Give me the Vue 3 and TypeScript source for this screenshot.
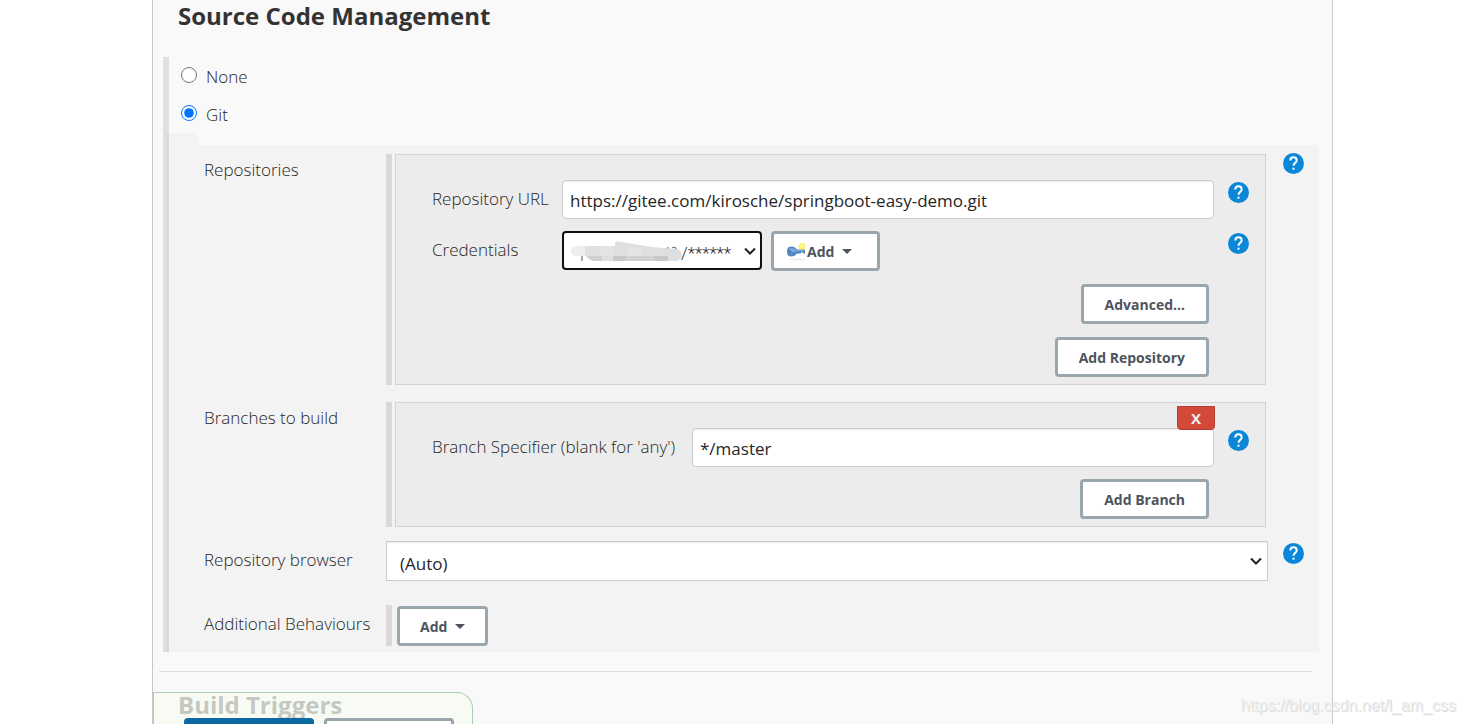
<script setup lang="ts">
import { ref } from 'vue'

const scm = ref('git')
const repositoryUrl = ref('https://gitee.com/kirosche/springboot-easy-demo.git')
const branch = ref('*/master')
</script>

<template>
  <div class="page">
    <main class="panel">
      <h2>Source Code Management</h2>

      <section class="scm">
        <label class="choice"><input v-model="scm" type="radio" name="scm" value="none"><span>None</span></label>
        <label class="choice"><input v-model="scm" type="radio" name="scm" value="git"><span>Git</span></label>

        <div class="nested">
          <div class="tab"></div>
          <div class="settings">
            <div class="row">
              <span class="name">Repositories</span>
              <div class="group">
                <div class="box repos">
                  <div class="field">
                    <label for="url">Repository URL</label>
                    <input id="url" v-model="repositoryUrl" class="text" type="text">
                    <button class="help" type="button" aria-label="Help for Repository URL">
                      <svg viewBox="0 0 21 21"><circle cx="10.5" cy="10.5" r="10.5" /><path d="M7.3 7.6C7.3 5.6 8.7 4.3 10.5 4.3s3.2 1.3 3.2 3.1c0 2.1-3.2 2.6-3.2 5.3" /><rect x="9.5" y="14.7" width="2" height="2" /></svg>
                    </button>
                  </div>
                  <div class="field second">
                    <label for="credentials">Credentials</label>
                    <div class="credentials">
                      <div class="select-wrap">
                        <select id="credentials" class="account"><option>/******</option></select>
                        <svg class="chevron" viewBox="0 0 12 8" aria-hidden="true"><path d="M1 1.500l5 5 5-5" /></svg>
                      </div>
                      <svg class="smudge" viewBox="0 0 112 22" aria-hidden="true">
                        <path class="mark" d="M11 13v7M95 8l2-1.500v5M101 7q4-2 4 1q0 2-3 2" />
                        <path fill="#eeeeee" d="M5 5h12v10H5a5 5 0 0 1 0-10z" />
                        <path fill="#dedfe0" d="M14 5h30V2q2-3 6-1l31 5 25 2q5 2 5 7-2 5-6 5H23q-7-1-9-7z" />
                        <path fill="#cfcfcf" d="M17 15h14v5h-8q-4-1-6-5z" />
                        <path fill="#c8c8c8" d="M42 15h13v5H42zM83 15h14v5H83z" />
                        <path fill="#d2d2d2" d="M55 15h28v5H55z" />
                        <path fill="#e4e4e4" d="M29 5h14v10H29zM57 6l13 1v8H57z" />
                      </svg>
                      <button class="btn key-btn" type="button">
                        <svg class="key" viewBox="0 0 20 18" aria-hidden="true">
                          <ellipse cx="10" cy="16.500" rx="8" ry="1" fill="#eeeeee" />
                          <circle cx="15" cy="3.500" r="3.500" fill="#fff36b" />
                          <circle cx="15" cy="3.500" r="1.500" fill="#fff9a8" />
                          <path fill="#5688c2" d="M1 4.500q4-2 7 0l2 2h8v4h-2v-1h-2v1h-4l-2 2q-4 2-7 0-2-4 0-8z" />
                          <path fill="#80addd" d="M2 6q4-2 7 1h8v1H9Q6 10 2 8z" />
                          <circle cx="3" cy="8" r="1" fill="#416b9d" />
                        </svg>
                        <span>Add</span><i class="caret"></i>
                      </button>
                    </div>
                    <button class="help" type="button" aria-label="Help for Credentials">
                      <svg viewBox="0 0 21 21"><circle cx="10.5" cy="10.5" r="10.5" /><path d="M7.3 7.6C7.3 5.6 8.7 4.3 10.5 4.3s3.2 1.3 3.2 3.1c0 2.1-3.2 2.6-3.2 5.3" /><rect x="9.5" y="14.7" width="2" height="2" /></svg>
                    </button>
                  </div>
                  <div class="actions">
                    <button class="btn" type="button">Advanced...</button>
                    <button class="btn" type="button">Add Repository</button>
                  </div>
                </div>
              </div>
              <button class="help outer" type="button" aria-label="Help for Repositories">
                <svg viewBox="0 0 21 21"><circle cx="10.5" cy="10.5" r="10.5" /><path d="M7.3 7.6C7.3 5.6 8.7 4.3 10.5 4.3s3.2 1.3 3.2 3.1c0 2.1-3.2 2.6-3.2 5.3" /><rect x="9.5" y="14.7" width="2" height="2" /></svg>
              </button>
            </div>

            <div class="row">
              <span class="name">Branches to build</span>
              <div class="group wide">
                <div class="box">
                  <div class="field branch">
                    <label for="branch">Branch Specifier (blank for 'any')</label>
                    <div class="branch-input">
                      <input id="branch" v-model="branch" class="text" type="text">
                      <button class="delete" type="button">X</button>
                    </div>
                    <button class="help" type="button" aria-label="Help for Branch Specifier">
                      <svg viewBox="0 0 21 21"><circle cx="10.5" cy="10.5" r="10.5" /><path d="M7.3 7.6C7.3 5.6 8.7 4.3 10.5 4.3s3.2 1.3 3.2 3.1c0 2.1-3.2 2.6-3.2 5.3" /><rect x="9.5" y="14.7" width="2" height="2" /></svg>
                    </button>
                  </div>
                  <div class="actions">
                    <button class="btn" type="button">Add Branch</button>
                  </div>
                </div>
              </div>
            </div>

            <div class="row browser-row">
              <label class="name" for="browser">Repository browser</label>
              <div class="select-wrap grow">
                <select id="browser" class="browser"><option>(Auto)</option></select>
                <svg class="chevron" viewBox="0 0 12 8" aria-hidden="true"><path d="M1 1.500l5 5 5-5" /></svg>
              </div>
              <button class="help outer" type="button" aria-label="Help for Repository browser">
                <svg viewBox="0 0 21 21"><circle cx="10.5" cy="10.5" r="10.5" /><path d="M7.3 7.6C7.3 5.6 8.7 4.3 10.5 4.3s3.2 1.3 3.2 3.1c0 2.1-3.2 2.6-3.2 5.3" /><rect x="9.5" y="14.7" width="2" height="2" /></svg>
              </button>
            </div>

            <div class="row behaviours">
              <span class="name">Additional Behaviours</span>
              <div class="group wide">
                <button class="btn" type="button"><span>Add</span><i class="caret"></i></button>
              </div>
            </div>
          </div>
        </div>
      </section>

      <hr>
      <h2 class="triggers">Build Triggers</h2>
    </main>

    <div class="save-bar">
      <button class="save" type="button" aria-label="Save"></button>
      <button class="btn" type="button" aria-label="Apply"></button>
    </div>
    <div class="watermark">https://blog.csdn.net/l_am_css</div>
  </div>
</template>

<style>
body { margin: 0; background: #fff; }
</style>

<style scoped>
* { box-sizing: border-box; }
.page {
  position: relative;
  height: 100vh;
  overflow: hidden;
  font-family: "Open Sans", "Noto Sans", sans-serif;
  font-size: 17px;
  font-weight: 330;
  line-height: 24px;
  color: #262626;
}
button, input, select { font: inherit; color: inherit; margin: 0; }
.panel {
  min-height: 100vh;
  margin: 0 132px 0 152px;
  padding: 0 13px 0 10px;
  border: solid #c8c8c8;
  border-width: 0 1px;
  background: #f9f9f9;
}
h2 { margin: 0 0 0 15px; font-size: 24px; line-height: 32px; font-weight: 700; color: #333; }
.scm { margin-top: 25px; border-left: 6px solid #e0e0e0; }
.choice { display: flex; align-items: center; height: 38px; padding: 2px 0 0 12px; }
.choice input { width: 16px; height: 16px; margin: 0 9px 4px 0; }
.nested { margin-left: -3px; border-left: 3px solid #d9d9d9; }
.tab { width: 29px; height: 12px; background: #f3f3f3; }
.settings {
  display: flex;
  flex-direction: column;
  gap: 17px;
  padding: 9px 15px 6px 35px;
  background: #f3f3f3;
}
.row { display: flex; align-items: flex-start; }
.name { flex: 0 0 182px; padding-top: 4px; white-space: nowrap; }
.group { flex: 1; min-width: 0; padding-left: 3px; border-left: 6px solid #d9d9d9; }
.group.wide { margin-right: 38px; }
.box { padding: 25px 16px 7px 36px; border: 1px solid #d3d3d3; background: #ececec; }
.field { display: flex; align-items: flex-start; }
.field > label { flex: 0 0 130px; padding-top: 7px; white-space: nowrap; }
.field.branch > label { flex-basis: 260px; }
.field.second { margin-top: 12px; }
.text {
  flex: 1;
  min-width: 0;
  width: 100%;
  height: 39px;
  padding: 1px 7px 0;
  border: 1px solid #ccc;
  border-radius: 4px;
  background: #fff;
  box-shadow: inset 0 1px 1px rgba(0, 0, 0, 0.075);
  outline: 0;
  font-weight: 370;
}
.help { flex: none; width: 21px; height: 21px; margin: 2px 0 0 14px; padding: 0; border: 0; background: none; }
.help.outer { margin: -1px 0 0 17px; }
.help svg { display: block; width: 21px; height: 21px; }
.help circle { fill: #0b87da; }
.help path { fill: none; stroke: #fff; stroke-width: 2; }
.help rect { fill: #fff; }
.credentials { position: relative; display: flex; flex: 1; gap: 9px; }
.select-wrap { position: relative; display: flex; }
.select-wrap.grow { flex: 1; }
.select-wrap select { appearance: none; outline: 0; }
.chevron { position: absolute; right: 6px; top: 16px; width: 12px; height: 8px; pointer-events: none; }
.chevron path { fill: none; stroke: #222; stroke-width: 2; }
.account {
  width: 200px;
  height: 39px;
  padding: 4px 0 0 117px;
  border: 2px solid #101010;
  border-radius: 4px;
  background: #fff;
  font-family: Roboto, sans-serif;
}
.smudge { position: absolute; left: 9px; top: 10px; width: 112px; height: 22px; pointer-events: none; }
.mark { fill: none; stroke: #555; stroke-width: 1; }
.btn {
  height: 40px;
  padding: 1px 20px 0;
  border: 3px solid #9aa6ae;
  border-radius: 4px;
  background: #fff;
  color: #4d545d;
  font-size: 14px;
  font-weight: 700;
  line-height: 32px;
  white-space: nowrap;
}
.key-btn { display: flex; align-items: center; padding: 1px 25px 0 13px; }
.key { width: 20px; height: 18px; }
.caret {
  display: inline-block;
  margin-left: 8px;
  vertical-align: 3px;
  border: solid transparent;
  border-width: 5px 5px 0;
  border-top-color: #4d545d;
}
.actions { display: flex; flex-direction: column; align-items: flex-end; gap: 13px; padding-right: 40px; margin-top: 13px; }
.actions .btn { padding: 1px 21px 0; }
.branch-input { position: relative; display: flex; flex: 1; }
.branch ~ .actions { margin-top: 12px; }
.delete {
  position: absolute;
  right: -1px;
  top: -22px;
  width: 38px;
  height: 24px;
  padding: 0;
  border: 1px solid #b93b2f;
  border-radius: 0 0 4px 4px;
  background: #d24939;
  color: #f3eeee;
  font-size: 15px;
  font-weight: 700;
  line-height: 20px;
}
.browser-row { margin-top: -3px; }
.browser-row .name { padding-top: 7px; }
.browser {
  width: 100%;
  height: 40px;
  padding: 5px 0 0 13px;
  border: 1px solid #ccc;
  border-radius: 0;
  background: #fff;
  box-shadow: inset 0 1px 1px rgba(0, 0, 0, 0.075);
  font-weight: 370;
}
.browser-row .help.outer { margin: 2px 0 0 15px; }
.behaviours { margin-top: 7px; }
.behaviours .name { padding-top: 7px; }
.behaviours .group { padding: 1px 0 0 5px; }
.behaviours .btn { display: block; }
hr { margin: 19px 7px 0 -4px; border: 0; border-top: 1px solid #ddd; }
.triggers { margin-top: 17px; }
.save-bar {
  position: absolute;
  left: 153px;
  bottom: 0;
  display: flex;
  gap: 10px;
  width: 320px;
  height: 32px;
  padding: 25px 18px 0 30px;
  overflow: hidden;
  border: solid #a9ceb6;
  border-width: 1px 1px 0;
  border-radius: 0 16px 0 0;
  background: rgba(246, 251, 241, 0.75);
}
.save-bar button { flex: none; width: 130px; height: 40px; }
.save { border: 0; border-radius: 4px; background: #0b6aa2; }
.watermark {
  position: absolute;
  right: 9px;
  bottom: 8px;
  font-family: "Liberation Sans", Arial, sans-serif;
  font-size: 16px;
  font-weight: 400;
  line-height: 20px;
  color: #efefef;
  text-shadow: 1px 1px 0 #dcdcdc;
}
</style>
